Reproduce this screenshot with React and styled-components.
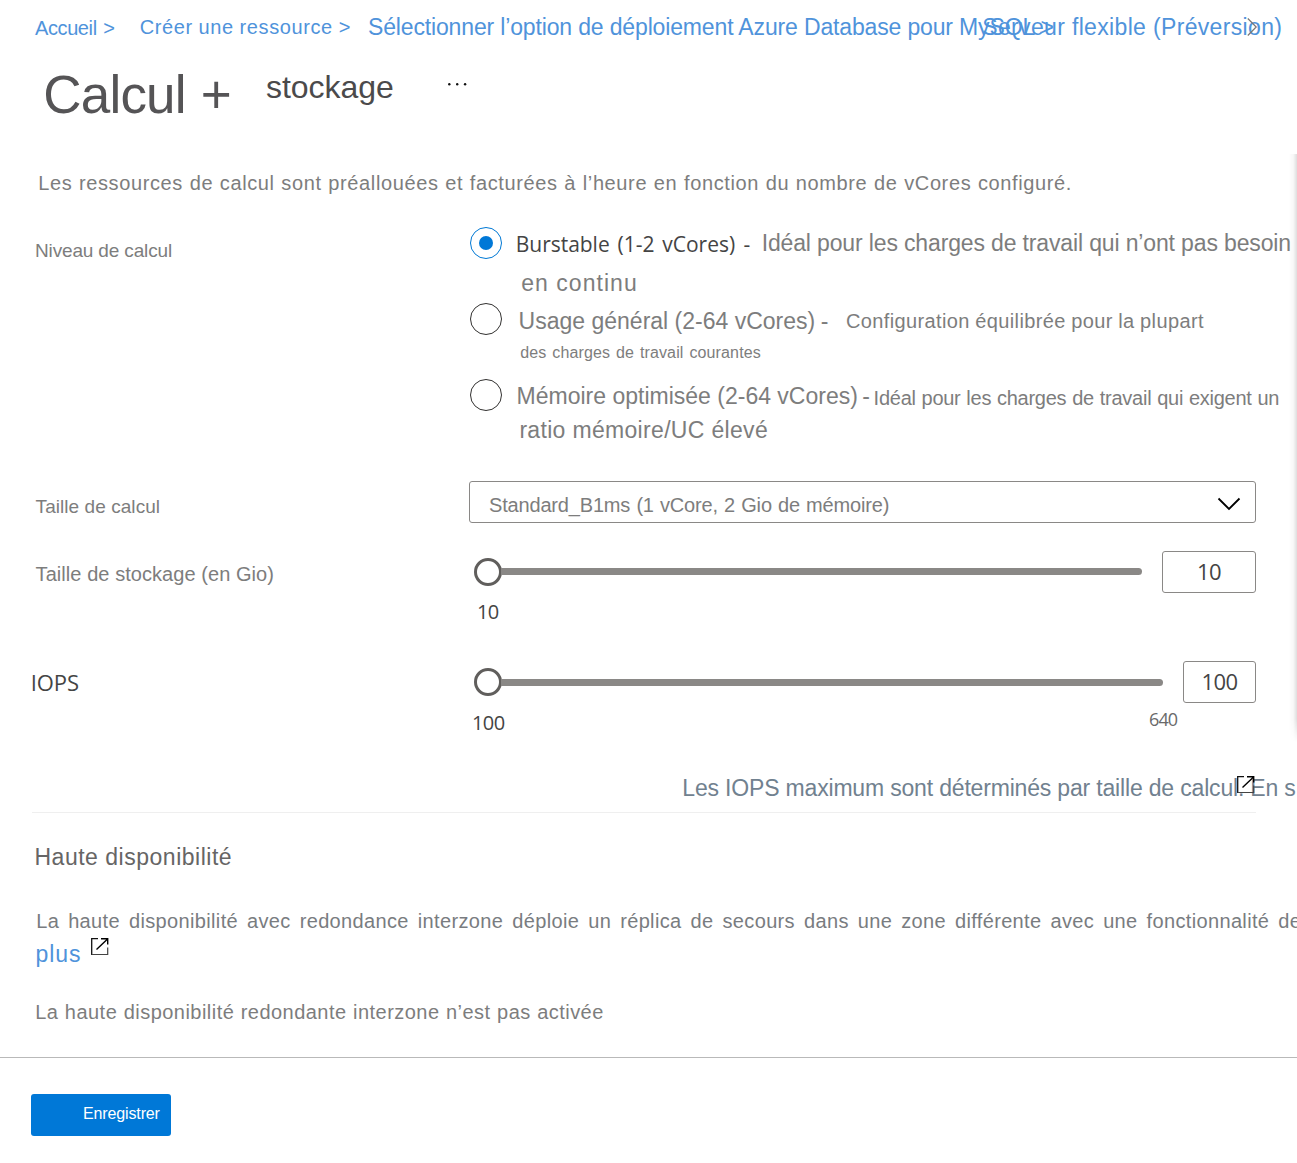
import React from 'react';
import styled, { createGlobalStyle } from 'styled-components';

const Global = createGlobalStyle`
  * { box-sizing: border-box; }
  body { margin: 0; background: #fff; overflow: hidden; }
`;

const Page = styled.div`
  position: relative;
  width: 1297px;
  height: 1163px;
  overflow: hidden;
  background: #fff;
  font-family: "Liberation Sans", Arial, sans-serif;
  color: #7d7d7d;
`;

const Row = styled.div`
  display: flex;
  align-items: flex-start;
  height: ${(p) => p.$h}px;
  padding-left: ${(p) => p.$pl || 0}px;
`;

const Stack = styled.div`
  display: flex;
  flex-direction: column;
`;

const Text = styled.span`
  display: block;
  flex: none;
  white-space: pre;
  width: ${(p) => (p.$w ? `${p.$w}px` : 'auto')};
  margin-top: ${(p) => p.$mt || 0}px;
  font-size: ${(p) => p.$size || 20}px;
  line-height: 30px;
  letter-spacing: ${(p) => p.$ls || 0}px;
  word-spacing: ${(p) => p.$ws || 0}px;
  color: ${(p) => p.$color || 'inherit'};
`;

const Numeral = styled(Text)`
  font-family: "Open Sans", "Noto Sans", sans-serif;
  color: ${(p) => p.$color || '#444'};
`;

const Crumb = styled(Text).attrs({ as: 'a' })`
  color: #4f93db;
`;

const Title = styled(Text).attrs({ as: 'h1' })`
  margin-bottom: 0;
  font-weight: 400;
  line-height: 60px;
  color: #555456;
`;

const Label = styled(Text)`
  width: ${(p) => p.$w || 435}px;
`;

const Radio = styled.span`
  flex: none;
  display: grid;
  place-items: center;
  width: 32px;
  height: 32px;
  border: 1.5px solid ${(p) => (p.$on ? '#0078d4' : '#323130')};
  border-radius: 50%;
  &::after {
    content: '';
    width: 14px;
    height: 14px;
    border-radius: 50%;
    background: ${(p) => (p.$on ? '#0078d7' : 'transparent')};
  }
`;

const Option = styled.div`
  display: flex;
  height: 76px;
`;

const Lines = styled(Stack)`
  flex: none;
  padding-left: ${(p) => p.$pl}px;
`;

const Line = styled.div`
  display: flex;
  height: ${(p) => p.$h || 30}px;
  padding-left: ${(p) => p.$pl || 0}px;
`;

const Select = styled.div`
  display: flex;
  justify-content: space-between;
  width: 787px;
  height: 42px;
  padding: 0 14px 0 19px;
  border: 1px solid #8a8886;
  border-radius: 3px;
`;

const Slider = styled.div`
  display: flex;
  align-items: center;
  width: ${(p) => p.$w}px;
  height: 28px;
  margin-top: 7px;
`;

const Thumb = styled.span`
  flex: none;
  width: 28px;
  height: 28px;
  border: 3px solid #605e5c;
  border-radius: 50%;
`;

const Track = styled.span`
  flex: 1;
  height: 7px;
  margin-left: -1px;
  margin-top: ${(p) => p.$shift}px;
  border-radius: 0 4px 4px 0;
  background: #8a8886;
`;

const NumberBox = styled.div`
  display: flex;
  justify-content: center;
  width: ${(p) => p.$w}px;
  height: 42px;
  margin-left: 20px;
  padding-top: 4px;
  border: 1px solid #8a8886;
  border-radius: 3px;
`;

const Rule = styled.div`
  width: 1224px;
  height: 1px;
  margin-left: 32px;
  background: #efefef;
`;

const Footer = styled.footer`
  height: 106px;
  padding: 36px 0 0 31px;
  border-top: 1px solid #b9b9b9;
`;

const SaveButton = styled.button`
  display: flex;
  width: 140px;
  height: 42px;
  padding: 5px 0 0 52px;
  border: 0;
  border-radius: 3px;
  background: #0078d7;
  color: #fff;
  font-family: inherit;
`;

const EdgeShadow = styled.div`
  position: absolute;
  top: 154px;
  right: 0;
  width: 8px;
  height: 588px;
  background: linear-gradient(to right, rgba(0, 0, 0, 0), rgba(0, 0, 0, 0.03) 55%, rgba(0, 0, 0, 0.13));
  mask-image: linear-gradient(to bottom, #000 0, #000 565px, transparent);
`;

const Glyph = styled.svg`
  display: block;
  flex: none;
  margin-top: ${(p) => p.$mt || 0}px;
  overflow: visible;
`;

const External = (props) => (
  <Glyph width="18" height="18" viewBox="0 0 18 18" fill="none" {...props}>
    <path d="M7 .7H.7V17" stroke="#111" strokeWidth="1.3" />
    <path d="M.7 16.5h16V9.5" stroke="#444" strokeWidth="1.2" />
    <path d="M10 .7h6.7V6.5M5.5 11.5 16.3 1.2" stroke="#000" strokeWidth="1.4" />
  </Glyph>
);

export default function App() {
  return (
    <Page>
      <Global />
      <Row as="nav" $h={60} $pl={35}>
        <Crumb $w={104.7} $mt={13} $ls={-0.4} $ws={1.3}>{'Accueil >'}</Crumb>
        <Crumb $w={228.3} $mt={12} $ls={0.6} $ws={-0.3}>{'Créer une ressource >'}</Crumb>
        <Crumb $w={614.3} $mt={12} $size={23} $ls={-0.15}>
          {'Sélectionner l’option de déploiement Azure Database pour MySQL >'}
        </Crumb>
        <Crumb $w={265} $mt={12} $size={23} $ls={0.339}>Serveur flexible (Préversion)</Crumb>
        <Glyph $mt={17.5} width="10" height="18" viewBox="0 0 10 18" fill="none">
          <path d="M.8.5 9.2 9 .8 17.5" stroke="#7a7672" strokeWidth="1.2" />
        </Glyph>
      </Row>

      <Row $h={90} $pl={43.3}>
        <Title $w={222.7} $mt={5} $size={53} $ls={-0.8} $ws={1}>Calcul +</Title>
        <Text $w={182.3} $mt={12} $size={32} $ls={-0.03} $color="#4b4a4b">stockage</Text>
        <Glyph $mt={23} width="20" height="3" viewBox="0 0 20 3" fill="#111">
          <circle cx="1.3" cy="1.2" r="1.2" />
          <circle cx="9.2" cy="1.2" r="1.2" />
          <circle cx="17.1" cy="1.2" r="1.2" />
        </Glyph>
      </Row>

      <Row $h={77} $pl={38.2}>
        <Text $mt={18} $ls={0.62} $ws={0.5}>
          Les ressources de calcul sont préallouées et facturées à l’heure en fonction du nombre de vCores configuré.
        </Text>
      </Row>

      <Row $h={254} $pl={35}>
        <Label $mt={9} $size={19} $ls={-0.15}>Niveau de calcul</Label>
        <Stack>
          <Option>
            <Radio $on />
            <Lines $pl={13.8}>
              <Line $h={40}>
                <Numeral $mt={2} $w={227.7} $size={21} $ls={-0.03} $ws={2.5}>Burstable (1-2 vCores)</Numeral>
                <Numeral $mt={2} $w={18.2} $size={21}>-</Numeral>
                <Text $mt={1} $size={23} $ls={-0.144}>Idéal pour les charges de travail qui n’ont pas besoin</Text>
              </Line>
              <Line $pl={5.4}>
                <Text $mt={1} $size={23} $ls={1.04}>en continu</Text>
              </Line>
            </Lines>
          </Option>
          <Option>
            <Radio />
            <Lines $pl={16.6}>
              <Line $h={34}>
                <Text $mt={3} $w={302.1} $size={23}>Usage général (2-64 vCores)</Text>
                <Text $mt={3} $w={25.3} $size={23}>-</Text>
                <Text $mt={3} $ls={0.37} $ws={-0.4}>Configuration équilibrée pour la plupart</Text>
              </Line>
              <Line $pl={1.6}>
                <Text $mt={1} $size={16} $ls={0.14} $ws={1.25}>des charges de travail courantes</Text>
              </Line>
            </Lines>
          </Option>
          <Option>
            <Radio />
            <Lines $pl={14.6}>
              <Line $h={34}>
                <Text $mt={2} $w={345.6} $size={23}>Mémoire optimisée (2-64 vCores)</Text>
                <Text $mt={2} $w={11.4} $size={23}>-</Text>
                <Text $mt={4} $ls={-0.25} $ws={0.5}>Idéal pour les charges de travail qui exigent un</Text>
              </Line>
              <Line $pl={2.8}>
                <Text $mt={2} $size={23} $ls={0.32}>ratio mémoire/UC élevé</Text>
              </Line>
            </Lines>
          </Option>
        </Stack>
      </Row>

      <Row $h={70} $pl={35.6}>
        <Label $w={433.4} $mt={11} $size={19} $ls={0.06}>Taille de calcul</Label>
        <Select>
          <Text $mt={8} $ls={-0.17} $ws={0.8}>Standard_B1ms (1 vCore, 2 Gio de mémoire)</Text>
          <Glyph $mt={14.5} width="24" height="14" viewBox="0 0 24 14" fill="none">
            <path d="M1.5 1.5 12 12 22.5 1.5" stroke="#000" strokeWidth="1.8" />
          </Glyph>
        </Select>
      </Row>

      <Row $h={110} $pl={35.6}>
        <Label $w={438.4} $mt={8} $ls={0.06}>Taille de stockage (en Gio)</Label>
        <Stack>
          <Row $h={46}>
            <Slider $w={668}>
              <Thumb />
              <Track $shift={-1} />
            </Slider>
            <NumberBox $w={94}>
              <Numeral $size={22} $ls={-0.6}>10</Numeral>
            </NumberBox>
          </Row>
          <Row $h={30} $pl={3}>
            <Numeral $ls={-0.6}>10</Numeral>
          </Row>
        </Stack>
      </Row>

      <Row $h={112} $pl={30.8}>
        <Numeral $w={441.2} $mt={6} $size={22} $ls={-0.1}>IOPS</Numeral>
        <Stack>
          <Row $h={46} $pl={2}>
            <Slider $w={689}>
              <Thumb />
              <Track $shift={1} />
            </Slider>
            <NumberBox $w={73}>
              <Numeral $size={22} $ls={-0.6}>100</Numeral>
            </NumberBox>
          </Row>
          <Row $h={36}>
            <Numeral $w={677} $mt={1} $ls={-0.6}>100</Numeral>
            <Numeral $mt={-3} $size={18} $ls={-0.9} $color="#6a6a6a">640</Numeral>
          </Row>
        </Stack>
      </Row>

      <Row $h={39} $pl={682.3}>
        <Text $w={554.7} $size={23} $ls={-0.177} $color="#71818f">
          Les IOPS maximum sont déterminés par taille de calcul. En s
        </Text>
        <External $mt={3} />
      </Row>
      <Rule />

      <Row $h={93} $pl={34.5}>
        <Text $mt={29} $size={23} $ls={0.508} $color="#666565">Haute disponibilité</Text>
      </Row>
      <Row $h={33} $pl={36.2}>
        <Text $ls={0.35} $ws={3.1} $color="#797c80">
          La haute disponibilité avec redondance interzone déploie un réplica de secours dans une zone différente avec une fonctionnalité de
        </Text>
      </Row>
      <Row $h={58} $pl={35.4}>
        <Crumb $w={55.6} $size={23} $ls={0.969}>plus</Crumb>
        <External $mt={-1} />
      </Row>
      <Row $h={60} $pl={35.2}>
        <Text $ls={0.46} $ws={0.5}>La haute disponibilité redondante interzone n’est pas activée</Text>
      </Row>

      <Footer>
        <SaveButton>
          <Text $size={16} $ls={-0.13}>Enregistrer</Text>
        </SaveButton>
      </Footer>
      <EdgeShadow />
    </Page>
  );
}
